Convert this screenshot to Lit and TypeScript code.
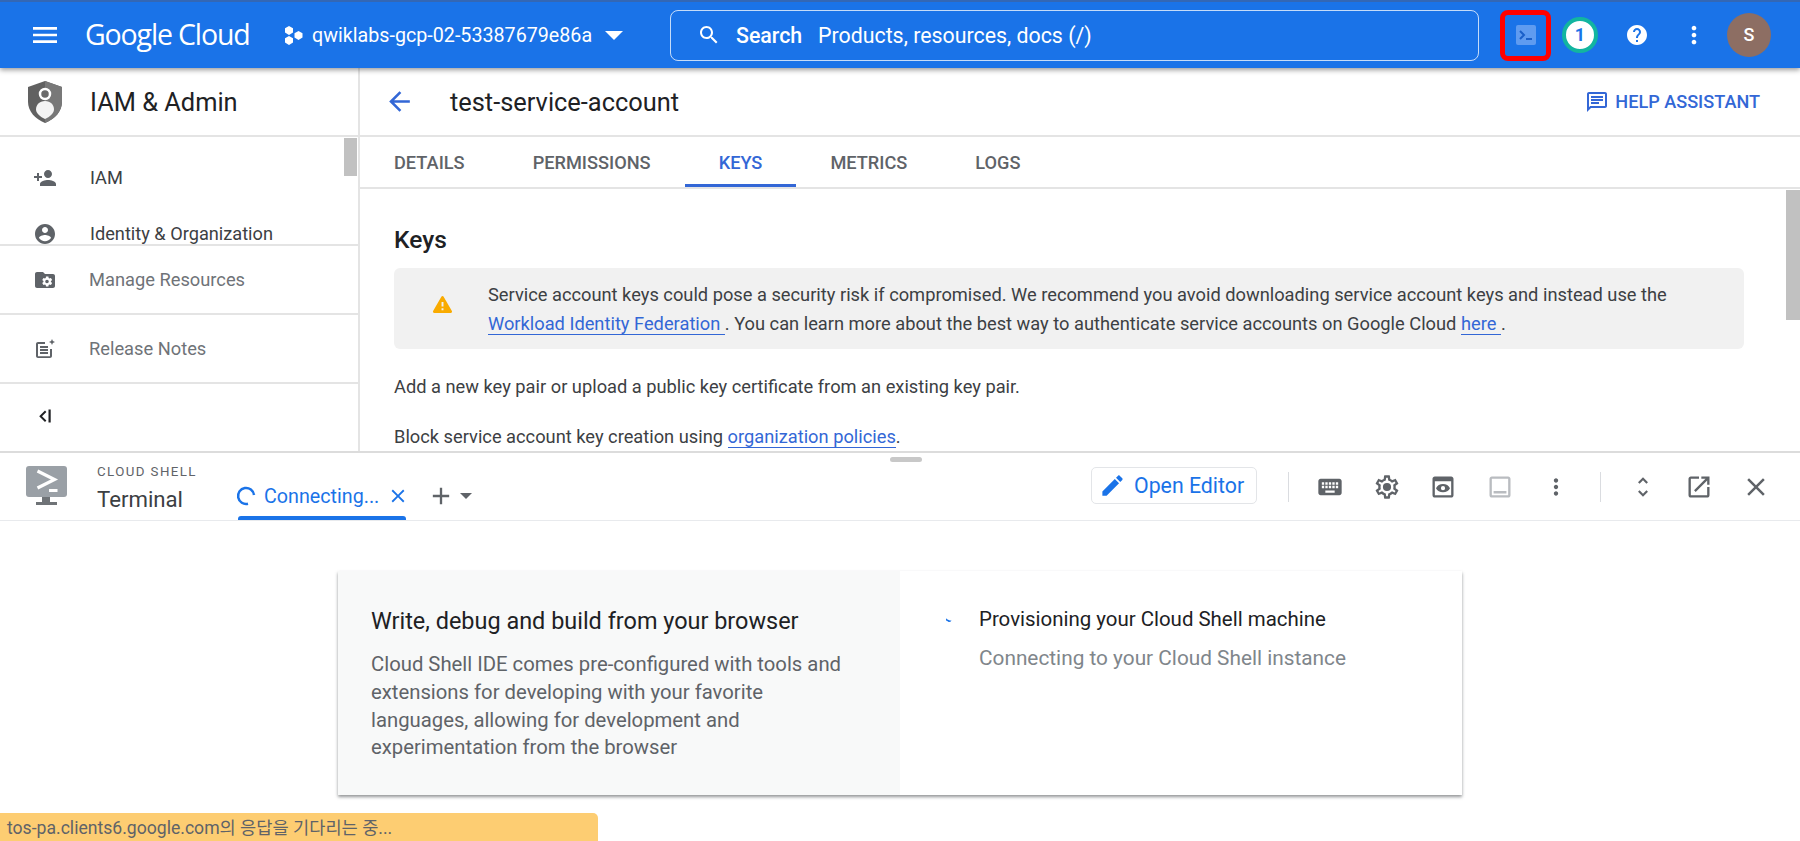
import { LitElement, html, css, svg } from "lit";
import { customElement } from "lit/decorators.js";

const P = {
  menu: "M3 18h18v-2H3v2zm0-5h18v-2H3v2zm0-7v2h18V6H3z",
  search: "M15.5 14h-.79l-.28-.27C15.41 12.59 16 11.11 16 9.5 16 5.91 13.09 3 9.5 3S3 5.91 3 9.5 5.91 16 9.5 16c1.61 0 3.09-.59 4.23-1.57l.27.28v.79l5 4.99L20.49 19l-4.99-5zm-6 0C7.01 14 5 11.99 5 9.5S7.01 5 9.5 5 14 7.01 14 9.5 11.99 14 9.5 14z",
  help: "M12 2C6.48 2 2 6.48 2 12s4.48 10 10 10 10-4.48 10-10S17.52 2 12 2zm1 17h-2v-2h2v2zm2.07-7.75l-.9.92C13.45 12.9 13 13.5 13 15h-2v-.5c0-1.1.45-2.1 1.17-2.83l1.24-1.26c.37-.36.59-.86.59-1.41 0-1.1-.9-2-2-2s-2 .9-2 2H8c0-2.21 1.79-4 4-4s4 1.79 4 4c0 .88-.36 1.68-.93 2.25z",
  more: "M12 8c1.1 0 2-.9 2-2s-.9-2-2-2-2 .9-2 2 .9 2 2 2zm0 2c-1.1 0-2 .9-2 2s.9 2 2 2 2-.9 2-2-.9-2-2-2zm0 6c-1.1 0-2 .9-2 2s.9 2 2 2 2-.9 2-2-.9-2-2-2z",
  back: "M20 11H7.83l5.59-5.59L12 4l-8 8 8 8 1.41-1.41L7.83 13H20v-2z",
  personAdd: "M15 12c2.21 0 4-1.79 4-4s-1.79-4-4-4-4 1.79-4 4 1.79 4 4 4zm-9-2V7H4v3H1v2h3v3h2v-3h3v-2H6zm9 4c-2.67 0-8 1.34-8 4v2h16v-2c0-2.66-5.33-4-8-4z",
  account: "M12 2C6.48 2 2 6.48 2 12s4.48 10 10 10 10-4.48 10-10S17.52 2 12 2zm0 3c1.66 0 3 1.34 3 3s-1.34 3-3 3-3-1.34-3-3 1.34-3 3-3zm0 14.2c-2.5 0-4.71-1.28-6-3.22.03-1.99 4-3.08 6-3.08 1.99 0 5.97 1.09 6 3.08-1.29 1.94-3.5 3.22-6 3.22z",
  folderGear: "M20 6h-8l-2-2H4c-1.1 0-2 .9-2 2v12c0 1.1.9 2 2 2h16c1.1 0 2-.9 2-2V8c0-1.1-.9-2-2-2zm-2.06 7.5c0 .17-.02.33-.04.49l1.06.82c.09.08.12.21.06.32l-1 1.73c-.06.11-.19.15-.31.11l-1.24-.5c-.26.2-.54.37-.85.49l-.19 1.32c-.01.12-.12.22-.24.22h-2c-.12 0-.23-.1-.25-.22l-.19-1.32c-.3-.12-.58-.29-.84-.49l-1.24.5c-.11.04-.24 0-.31-.11l-1-1.73c-.06-.11-.04-.24.06-.32l1.06-.82c-.02-.16-.03-.33-.03-.49s.02-.33.04-.49l-1.06-.82c-.1-.08-.12-.21-.06-.32l1-1.73c.06-.11.19-.15.31-.11l1.24.5c.26-.2.54-.37.85-.49l.19-1.32c.01-.12.12-.22.24-.22h2c.12 0 .23.1.25.22l.19 1.32c.3.12.58.29.84.49l1.24-.5c.11-.04.24 0 .31.11l1 1.73c.06.11.04.24-.06.32l-1.06.82c.02.16.03.32.03.49zM14 11.7a1.8 1.8 0 1 0 0 3.6 1.8 1.8 0 0 0 0-3.6z",
  notes: "M17 19.22H5V7h7V5H5c-1.1 0-2 .9-2 2v12c0 1.1.9 2 2 2h12c1.1 0 2-.9 2-2v-7h-2v7.22zM7 9h8v2H7V9zm0 3v2h8v-2H7zm0 3h8v2H7v-2zM19 2l-.9 2.1L16 5l2.1.9L19 8l.9-2.1L22 5l-2.1-.9z",
  warning: "M12 3.200c.5 0 .9.300 1.200.700l8.600 15c.500.900-.100 2-1.200 2H3.400c-1.100 0-1.700-1.100-1.200-2l8.600-15c.300-.400.700-.700 1.200-.700zM13 18v-2h-2v2zm0-4v-4.500h-2V14z",
  edit: "M3 17.25V21h3.75L17.81 9.94l-3.75-3.75L3 17.25zM20.71 7.04c.39-.39.39-1.02 0-1.41l-2.34-2.34c-.39-.39-1.02-.39-1.41 0l-1.83 1.83 3.75 3.75 1.83-1.83z",
  close: "M19 6.41L17.59 5 12 10.59 6.41 5 5 6.41 10.59 12 5 17.59 6.41 19 12 13.41 17.59 19 19 17.59 13.41 12z",
  add: "M19 13h-6v6h-2v-6H5v-2h6V5h2v6h6v2z",
  keyboard: "M20 5H4c-1.1 0-1.99.9-1.99 2L2 17c0 1.1.9 2 2 2h16c1.1 0 2-.9 2-2V7c0-1.1-.9-2-2-2zm-9 3h2v2h-2V8zm0 3h2v2h-2v-2zM8 8h2v2H8V8zm0 3h2v2H8v-2zm-1 2H5v-2h2v2zm0-3H5V8h2v2zm9 7H8v-2h8v2zm0-4h-2v-2h2v2zm0-3h-2V8h2v2zm3 3h-2v-2h2v2zm0-3h-2V8h2v2z",
  settings: "M19.43 12.98c.04-.32.07-.64.07-.98s-.03-.66-.07-.98l2.11-1.65c.19-.15.24-.42.12-.64l-2-3.46c-.12-.22-.39-.3-.61-.22l-2.49 1c-.52-.4-1.08-.73-1.69-.98l-.38-2.65C14.46 2.18 14.25 2 14 2h-4c-.25 0-.46.18-.49.42l-.38 2.65c-.61.25-1.17.59-1.69.98l-2.49-1c-.23-.09-.49 0-.61.22l-2 3.46c-.13.22-.07.49.12.64l2.11 1.65c-.04.32-.07.65-.07.98s.03.66.07.98l-2.11 1.65c-.19.15-.24.42-.12.64l2 3.46c.12.22.39.3.61.22l2.49-1c.52.4 1.08.73 1.69.98l.38 2.65c.03.24.24.42.49.42h4c.25 0 .46-.18.49-.42l.38-2.65c.61-.25 1.17-.59 1.69-.98l2.49 1c.23.09.49 0 .61-.22l2-3.46c.12-.22.07-.49-.12-.64l-2.11-1.65zM17.45 11.27c.04.31.05.52.05.73 0 .21-.02.43-.05.73l-.14 1.13.89.7 1.08.84-.7 1.21-1.27-.51-1.04-.42-.9.68c-.43.32-.84.56-1.25.73l-1.06.43-.16 1.13-.2 1.35h-1.4l-.19-1.35-.16-1.13-1.06-.43c-.43-.18-.83-.41-1.23-.71l-.91-.7-1.06.43-1.27.51-.7-1.21 1.08-.84.89-.7-.14-1.13c-.03-.31-.05-.54-.05-.74s.02-.43.05-.73l.14-1.13-.89-.7-1.08-.84.7-1.21 1.27.51 1.04.42.9-.68c.43-.32.84-.56 1.25-.73l1.06-.43.16-1.13.2-1.35h1.39l.19 1.35.16 1.13 1.06.43c.43.18.83.41 1.23.71l.91.7 1.06-.43 1.27-.51.7 1.21-1.07.85-.89.7.14 1.13zM12 8.500a3.500 3.500 0 1 0 0 7 3.500 3.500 0 0 0 0-7z",
  preview: "M19 3H5c-1.1 0-2 .9-2 2v14c0 1.1.9 2 2 2h14c1.1 0 2-.9 2-2V5c0-1.1-.9-2-2-2zm0 16H5V7h14v12zM12 9.500c-2.700 0-5 1.400-6 3.500 1 2.100 3.300 3.500 6 3.500s5-1.400 6-3.500c-1-2.100-3.300-3.500-6-3.500zm0 1.700a1.800 1.800 0 1 1 0 3.600 1.800 1.800 0 0 1 0-3.600z",
  panel: "M19 3H5c-1.1 0-2 .9-2 2v14c0 1.1.9 2 2 2h14c1.1 0 2-.9 2-2V5c0-1.1-.9-2-2-2zm0 16H5V5h14v14zM6.500 15.500h11v2h-11z",
  openNew: "M19 19H5V5h7V3H5c-1.11 0-2 .9-2 2v14c0 1.1.89 2 2 2h14c1.1 0 2-.9 2-2v-7h-2v7zM14 3v2h3.59l-9.83 9.83 1.41 1.41L19 6.41V10h2V3h-7z",
  unfold: "M12 5.83L15.17 9l1.41-1.41L12 3 7.41 7.59 8.83 9 12 5.83zm0 12.34L8.83 15l-1.41 1.41L12 21l4.59-4.59L15.17 15 12 18.17z",
  chat: "M20 2H4c-1.1 0-1.99.9-1.99 2L2 22l4-4h14c1.1 0 2-.9 2-2V4c0-1.1-.9-2-2-2zm0 14H5.17L4 17.17V4h16v12zM6 12h8v2H6v-2zm0-3h12v2H6V9zm0-3h12v2H6V6z",
};

const icon = (d: string, size: number, cls = "") => html`<svg class="ic ${cls}" width=${size} height=${size} viewBox="0 0 24 24" fill="currentColor">${svg`<path d=${d} fill-rule="evenodd"></path>`}</svg>`;

@customElement("app-root")
export class AppRoot extends LitElement {
  static styles = css`
    :host { display: block; width: 1800px; height: 841px; overflow: hidden; position: relative; font-family: Roboto, "Noto Sans CJK KR", sans-serif; color: #202124; background: #fff; }
    .ic { display: block; flex: none; }
    .top { height: 68px; background: #1a73e8; border-top: 2px solid #3367b5; box-sizing: border-box; display: flex; align-items: center; color: #fff; position: relative; z-index: 2; box-shadow: 0 2px 5px rgba(0,0,0,.4); }
    .menu { margin-left: 29px; width: 32px; height: 32px; margin-right: 24px; }
    .logo { width: 164px; font: 400 28.5px "Open Sans", sans-serif; letter-spacing: -1.15px; white-space: nowrap; margin-right: 35px; margin-top: -2px; }
    .proj { margin-right: 8px; }
    .pname { width: 280px; font-size: 19.7px; white-space: nowrap; }
    .caret { margin-left: 13px; width: 18px; height: 9px; margin-right: 47px; }
    .search { width: 809px; height: 51px; box-sizing: border-box; border: 1px solid rgba(255,255,255,.75); border-radius: 8px; display: flex; align-items: center; padding-left: 26px; margin-right: 21px; font-size: 21.35px; white-space: nowrap; }
    .search .ic { margin-right: 15px; }
    .search b { font-weight: 500; width: 82px; }
    .red { width: 51px; height: 51px; box-sizing: border-box; border: 5px solid #ff0000; border-radius: 8px; display: flex; align-items: center; justify-content: center; margin-right: 11px; }
    .term { width: 20px; height: 20px; background: #5f9bf0; border-radius: 2px; color: #1a5fc9; }
    .badge { width: 36px; height: 36px; box-sizing: border-box; border: 4px solid #12b5a0; border-radius: 50%; background: #fff; color: #1a73e8; font: 700 18px/28px Roboto, sans-serif; text-align: center; margin-right: 27px; }
    .m32 { margin-right: 31px; }
    .m22 { margin-right: 19px; }
    .avatar { width: 44px; height: 44px; border-radius: 50%; background: #8d6e63; color: #fff; font: 500 18px/44px Roboto, sans-serif; text-align: center; }

    .upper { height: 383px; display: flex; }
    .side { width: 360px; box-sizing: border-box; border-right: 2px solid #e4e4e4; display: flex; flex-direction: column; flex: none; }
    .shead { height: 69px; box-sizing: border-box; border-bottom: 2px solid #e4e4e4; display: flex; align-items: center; padding-left: 28px; font-size: 25.4px; flex: none; }
    .shead svg { margin-right: 28px; }
    .snav { height: 107px; flex: none; overflow: hidden; display: flex; justify-content: space-between; border-bottom: 2px solid #e4e4e4; }
    .nlist { padding-top: 27px; display: flex; flex-direction: column; gap: 29px; }
    .row { display: flex; align-items: center; height: 27px; font-size: 18.2px; color: #3c4043; padding-left: 33px; flex: none; }
    .row .ic { margin-right: 33px; color: #5f6368; }
    .thumb { width: 13px; height: 38px; background: #c1c1c1; margin: 1px 1px 0 0; }
    .sitem { flex: none; height: 69px; box-sizing: border-box; border-bottom: 2px solid #e4e4e4; display: flex; align-items: center; font-size: 18.3px; color: #6f7378; padding-left: 33px; }
    .sitem .ic { color: #5f6368; margin-right: 32px; }
    .collapse { flex: 1; display: flex; align-items: center; padding-left: 36px; padding-bottom: 3px; color: #202124; }
    .main { flex: 1; min-width: 0; display: flex; flex-direction: column; position: relative; overflow: hidden; }
    .mhead { height: 69px; flex: none; box-sizing: border-box; border-bottom: 2px solid #e4e4e4; display: flex; align-items: center; padding-left: 24px; font-size: 25.4px; }
    .mhead .back { color: #3367d6; margin-right: 35px; }
    .title { flex: 1; }
    .assist { display: flex; align-items: center; color: #3367d6; font-size: 18.1px; font-weight: 500; margin-right: 40px; }
    .assist .ic { margin-right: 6px; }
    .tabs { height: 52px; flex: none; box-sizing: border-box; border-bottom: 2px solid #e4e4e4; display: flex; }
    .tab { padding: 0 34px; font-size: 18.2px; font-weight: 500; color: #5f6368; line-height: 52px; position: relative; }
    .tab.on { color: #3367d6; border-bottom: 3px solid #3367d6; height: 50px; box-sizing: border-box; }
    .body { position: relative; flex: 1; padding: 33px 56px 0 34px; overflow: hidden; }
    .body h2 { margin: 0 0 10px; font: 500 24.5px/36px Roboto, sans-serif; color: #202124; }
    .warn { height: 81px; background: #f1f1f1; border-radius: 6px; box-sizing: border-box; display: flex; align-items: center; padding-left: 37px; color: #f9ab00; }
    .warn .ic { margin-right: 34px; margin-top: -9px; }
    .warn p { margin: 0; font-size: 18.27px; line-height: 29px; color: #3c4043; white-space: nowrap; }
    a { color: #3367d6; text-decoration: none; border-bottom: 1px solid #3367d6; }
    .para { margin: 24px 0 0; font-size: 18.27px; line-height: 27px; color: #3c4043; white-space: nowrap; }
    .para + .para { margin-top: 23px; }
    .vthumb { position: absolute; right: 0; top: 1px; width: 14px; height: 130px; background: #c1c1c1; }

    .shell { position: relative; height: 390px; border-top: 2px solid #dcdcdc; box-sizing: border-box; }
    .handle { position: absolute; left: 890px; top: 4px; width: 32px; height: 5px; border-radius: 3px; background: #c8c8c8; }
    .shd { height: 68px; box-sizing: border-box; border-bottom: 1px solid #e8eaed; display: flex; align-items: stretch; }
    .mon { margin: 13px 30px 0 26px; width: 41px; height: 40px; }
    .names { width: 111px; padding-top: 11px; }
    .cs { font-size: 13.3px; letter-spacing: 1.4px; color: #5f6368; line-height: 16px; white-space: nowrap; }
    .tname { font-size: 22.2px; color: #3c4043; line-height: 26px; margin-top: 6px; }
    .stab { width: 169px; box-sizing: border-box; display: flex; align-items: center; color: #1a73e8; font-size: 19.7px; position: relative; padding-top: 19px; margin-left: 29px; }
    .stab::after { content: ""; position: absolute; left: 1px; right: 0; bottom: 0; height: 4px; background: #1a73e8; border-radius: 3px 3px 0 0; }
    .spin { margin: 0 8px 0 -1px; }
    .stab .ic.x { margin-left: 8px; }
    .addb { display: flex; align-items: center; color: #5f6368; padding-top: 19px; margin-left: 21px; flex: 1; }
    .drop { width: 0; height: 0; border: 6px solid transparent; border-top-color: #5f6368; border-bottom: 0; margin-left: 5px; }
    .tools { display: flex; align-items: center; color: #5f6368; height: 68px; }
    .edit { width: 166px; height: 37px; box-sizing: border-box; border: 1px solid #e3e5e8; border-radius: 5px; display: flex; align-items: center; padding-left: 7px; color: #1a73e8; font-size: 21.3px; margin: -3px 31px 0 0; white-space: nowrap; }
    .edit .ic { margin-right: 8px; }
    .div { width: 1px; height: 30px; background: #dadce0; }
    .t { width: 56.5px; display: flex; justify-content: center; }
    .t.first { margin-left: 13px; }
    .d2 { margin-left: 15px; }
    .t.second { margin-left: 14px; }
    .t.last { margin-right: 16px; }
    .faded { color: #b9bcc0; }
    .wrap { padding-top: 50px; display: flex; justify-content: center; }
    .panel { width: 1124px; height: 224px; display: flex; box-shadow: 0 2px 3px rgba(60,64,67,.55); }
    .pl { width: 562px; background: #f8f9f9; box-sizing: border-box; padding: 34px 0 0 33px; }
    .pl h3 { margin: 0 0 14px; font: 400 23.45px/32px Roboto, sans-serif; color: #202124; white-space: nowrap; }
    .pl p { margin: 0; font-size: 20.3px; line-height: 27.8px; color: #5f6368; width: 500px; white-space: nowrap; }
    .pr { flex: 1; box-sizing: border-box; padding: 35px 0 0 46px; display: flex; align-items: flex-start; }
    .dot { width: 6px; height: 6px; margin: 10px 0 0 0; border-radius: 0 0 4px 4px; border-bottom: 2px solid #1a73e8; box-sizing: border-box; flex: none; transform: rotate(20deg); }
    .pr .s1 { font-size: 20.45px; line-height: 26px; color: #202124; margin-left: 27px; white-space: nowrap; }
    .pr .s2 { font-size: 20.8px; line-height: 26px; color: #80868b; margin: 13px 0 0 27px; white-space: nowrap; }
    .status { position: absolute; left: 0; bottom: 0; width: 598px; height: 28px; background: #fdcd72; border-radius: 0 5px 0 0; box-sizing: border-box; padding: 3px 0 0 7px; font-size: 17.6px; line-height: 25px; color: #5f6368; white-space: nowrap; }
  `;

  render() {
    return html`
      <div class="top">
        <svg class="ic menu" viewBox="0 0 24 24" fill="currentColor"><path d=${P.menu}></path></svg>
        <div class="logo">Google Cloud</div>
        <svg class="ic proj" width="20" height="20" viewBox="0 0 20 20" fill="currentColor"><path d="M5 1l4 2.200v4.400L5 10 1 7.600V3.200zM5 11l4 2.200v4.400L5 20l-4-2.400v-4.400zM14.500 6l4 2.200v4.400l-4 2.400-4-2.400V8.200z"></path></svg>
        <div class="pname">qwiklabs-gcp-02-53387679e86a</div>
        <svg class="ic caret" viewBox="0 0 18 9" fill="currentColor"><path d="M0 0h18L9 9z"></path></svg>
        <div class="search">${icon(P.search, 24)}<b>Search</b><span>Products, resources, docs (/)</span></div>
        <div class="red"><svg class="ic term" viewBox="0 0 20 20" fill="none" stroke="currentColor" stroke-width="2"><path d="M4 6l4 4-4 4M10 14h6"></path></svg></div>
        <div class="badge">1</div>
        ${icon(P.help, 24, "m32")}
        ${icon(P.more, 28, "m22")}
        <div class="avatar">S</div>
      </div>
      <div class="upper">
        <aside class="side">
          <div class="shead">
            <svg width="34" height="42" viewBox="0 0 34 42"><path fill="#616161" d="M17 0l17 6v15c0 9-7 17-17 21C7 38 0 30 0 21V6z"></path><path fill="#787878" d="M17 0l17 6v15c0 9-7 17-17 21z"></path><circle cx="17" cy="13" r="5" fill="#6a6a6a" stroke="#fff" stroke-width="2.500"></circle><path fill="#f4f4f4" d="M17 20c5.500 0 9 4 9 8.500 0 3-3.500 7-9 9.500-5.500-2.500-9-6.500-9-9.500 0-4.500 3.500-8.500 9-8.500z"></path></svg>
            IAM &amp; Admin
          </div>
          <div class="snav">
            <div class="nlist">
              <div class="row">${icon(P.personAdd, 24)}IAM</div>
              <div class="row">${icon(P.account, 24)}Identity &amp; Organization</div>
            </div>
            <div class="thumb"></div>
          </div>
          <div class="sitem">${icon(P.folderGear, 24)}Manage Resources</div>
          <div class="sitem">${icon(P.notes, 24)}Release Notes</div>
          <div class="collapse"><svg class="ic" width="16" height="16" viewBox="0 0 16 16" fill="currentColor"><path d="M9 2.500l1.400 1.400L6 8.200l4.400 4.400L9 14 3.200 8.200z"></path><rect x="12.500" y="1.500" width="2.200" height="13"></rect></svg></div>
        </aside>
        <section class="main">
          <div class="mhead">
            <span class="back">${icon(P.back, 31)}</span>
            <div class="title">test-service-account</div>
            <div class="assist">${icon(P.chat, 24)}HELP ASSISTANT</div>
          </div>
          <div class="tabs">
            <div class="tab">DETAILS</div>
            <div class="tab">PERMISSIONS</div>
            <div class="tab on">KEYS</div>
            <div class="tab">METRICS</div>
            <div class="tab">LOGS</div>
          </div>
          <div class="body">
            <h2>Keys</h2>
            <div class="warn">
              ${icon(P.warning, 23)}
              <p>Service account keys could pose a security risk if compromised. We recommend you avoid downloading service account keys and instead use the<br><a>Workload Identity Federation </a> . You can learn more about the best way to authenticate service accounts on Google Cloud <a>here </a> .</p>
            </div>
            <p class="para">Add a new key pair or upload a public key certificate from an existing key pair.</p>
            <p class="para">Block service account key creation using <a>organization policies</a>.</p>
            <div class="vthumb"></div>
          </div>
        </section>
      </div>
      <div class="shell">
        <div class="handle"></div>
        <div class="shd">
          <svg class="mon" viewBox="0 0 41 40"><path fill="#9aa0a6" d="M3 0h35a3 3 0 0 1 3 3v25a3 3 0 0 1-3 3H3a3 3 0 0 1-3-3V3a3 3 0 0 1 3-3z"></path><path fill="#6f7377" d="M16 31h8v5h7v3H10v-3h6z"></path><path d="M11.500 5l17 8.500-17 8.500M23 24.500h8.500" fill="none" stroke="#fff" stroke-width="3.200"></path></svg>
          <div class="names"><div class="cs">CLOUD SHELL</div><div class="tname">Terminal</div></div>
          <div class="stab">
            <svg class="spin ic" width="20" height="20" viewBox="0 0 20 20" fill="none" stroke="currentColor" stroke-width="2.500"><path d="M18 9A8 8 0 1 0 12 17.700"></path></svg>
            Connecting...
            ${icon(P.close, 22, "x")}
          </div>
          <div class="addb">${icon(P.add, 28)}<span class="drop"></span></div>
          <div class="tools">
            <div class="edit">${icon(P.edit, 27)}Open Editor</div>
            <div class="div"></div>
            <div class="t first">${icon(P.keyboard, 28)}</div>
            <div class="t">${icon(P.settings, 28)}</div>
            <div class="t">${icon(P.preview, 28)}</div>
            <div class="t faded">${icon(P.panel, 28)}</div>
            <div class="t">${icon(P.more, 26)}</div>
            <div class="div d2"></div>
            <div class="t second">${icon(P.unfold, 26)}</div>
            <div class="t">${icon(P.openNew, 28)}</div>
            <div class="t last">${icon(P.close, 30)}</div>
          </div>
        </div>
        <div class="wrap">
          <div class="panel">
            <div class="pl">
              <h3>Write, debug and build from your browser</h3>
              <p>Cloud Shell IDE comes pre-configured with tools and<br>extensions for developing with your favorite<br>languages, allowing for development and<br>experimentation from the browser</p>
            </div>
            <div class="pr">
              <div class="dot"></div>
              <div><div class="s1">Provisioning your Cloud Shell machine</div><div class="s2">Connecting to your Cloud Shell instance</div></div>
            </div>
          </div>
        </div>
      </div>
      <div class="status">tos-pa.clients6.google.com의 응답을 기다리는 중...</div>
    `;
  }
}
